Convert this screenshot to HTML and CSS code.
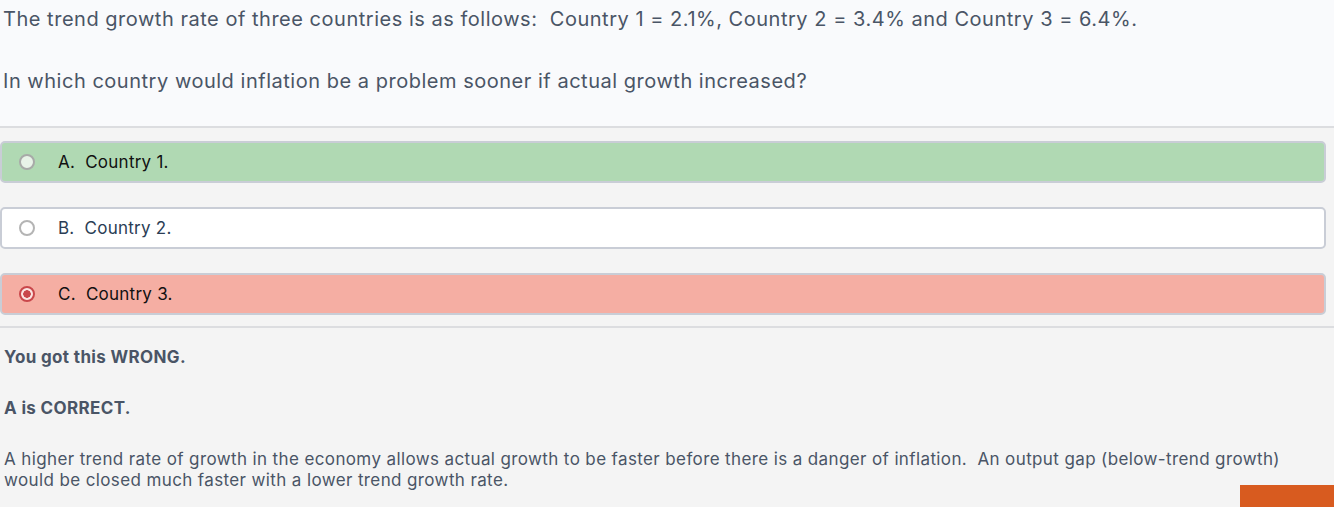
FILE: index.html
```html
<!DOCTYPE html>
<html>
<head>
<meta charset="utf-8">
<link rel="stylesheet" href="styles.css">
</head>
<body>
<div class="question">
  <p class="q-line">The trend growth rate of three countries is as follows:&nbsp; Country 1 = 2.1%, Country 2 = 3.4% and Country 3 = 6.4%.</p>
  <p class="q-line">In which country would inflation be a problem sooner if actual growth increased?</p>
</div>
<div class="answers">
  <div class="option correct">
    <span class="radio"></span>
    <span class="label">A.&nbsp; Country 1.</span>
  </div>
  <div class="option plain">
    <span class="radio"></span>
    <span class="label">B.&nbsp; Country 2.</span>
  </div>
  <div class="option wrong">
    <span class="radio checked"></span>
    <span class="label">C.&nbsp; Country 3.</span>
  </div>
</div>
<div class="feedback">
  <p class="fb-strong">You got this WRONG.</p>
  <p class="fb-strong">A is CORRECT.</p>
  <p class="fb-text">A higher trend rate of growth in the economy allows actual growth to be faster before there is a danger of inflation.&nbsp; An output gap (below-trend growth) would be closed much faster with a lower trend growth rate.</p>
  <div class="next-bar"><span class="next-btn"></span></div>
</div>
</body>
</html>
```

FILE: styles.css
```css
html, body {
  margin: 0;
  padding: 0;
  background: #f4f4f4;
  height: 507px;
  overflow: hidden;
}
body {
  font-family: Inter, "Liberation Sans", Arial, sans-serif;
  color: #4a5566;
}
.question {
  background: #f9fafc;
  border-bottom: 2px solid #dcdde0;
  height: 128px;
  box-sizing: border-box;
  padding: 7px 0 0 3px;
}
.q-line {
  margin: 0 0 38px 0;
  font-size: 20px;
  line-height: 24px;
  letter-spacing: 0.52px;
}
.answers {
  padding: 13px 8px 11px 0;
  display: flex;
  flex-direction: column;
  gap: 24px;
  border-bottom: 2px solid #dcdde0;
}
.option {
  height: 42px;
  box-sizing: border-box;
  border: 2px solid #c9cdd6;
  border-radius: 5px;
  display: flex;
  align-items: center;
  padding-left: 17px;
  font-size: 17px;
  letter-spacing: 0.25px;
}
.option.correct { background: #b0d9b3; color: #111; }
.option.plain { background: #ffffff; color: #2b3d55; }
.option.wrong { background: #f5aea3; color: #111; }
.radio {
  width: 16px;
  height: 16px;
  box-sizing: border-box;
  border-radius: 50%;
  border: 2px solid #a8aaa8;
  background: #e8f3e8;
  margin-right: 23px;
  flex: none;
}
.plain .radio { background: #fff; border-color: #b4b4b4; }
.radio.checked {
  border: 2px solid #c9474b;
  background: radial-gradient(circle, #c9474b 0 3.5px, #fbe3e0 4px);
}
.feedback {
  padding: 19px 0 0 4px;
}
.fb-strong {
  margin: 0 0 31px 0;
  font-weight: 700;
  font-size: 17px;
  line-height: 20px;
  letter-spacing: 0.35px;
}
.fb-text {
  margin: 0;
  font-size: 17px;
  line-height: 21px;
  letter-spacing: 0.38px;
  padding-right: 40px;
}
.next-bar {
  display: flex;
  justify-content: flex-end;
  margin-top: -6px;
}
.next-btn {
  display: block;
  width: 94px;
  height: 30px;
  background: #d85b1f;
}
```
